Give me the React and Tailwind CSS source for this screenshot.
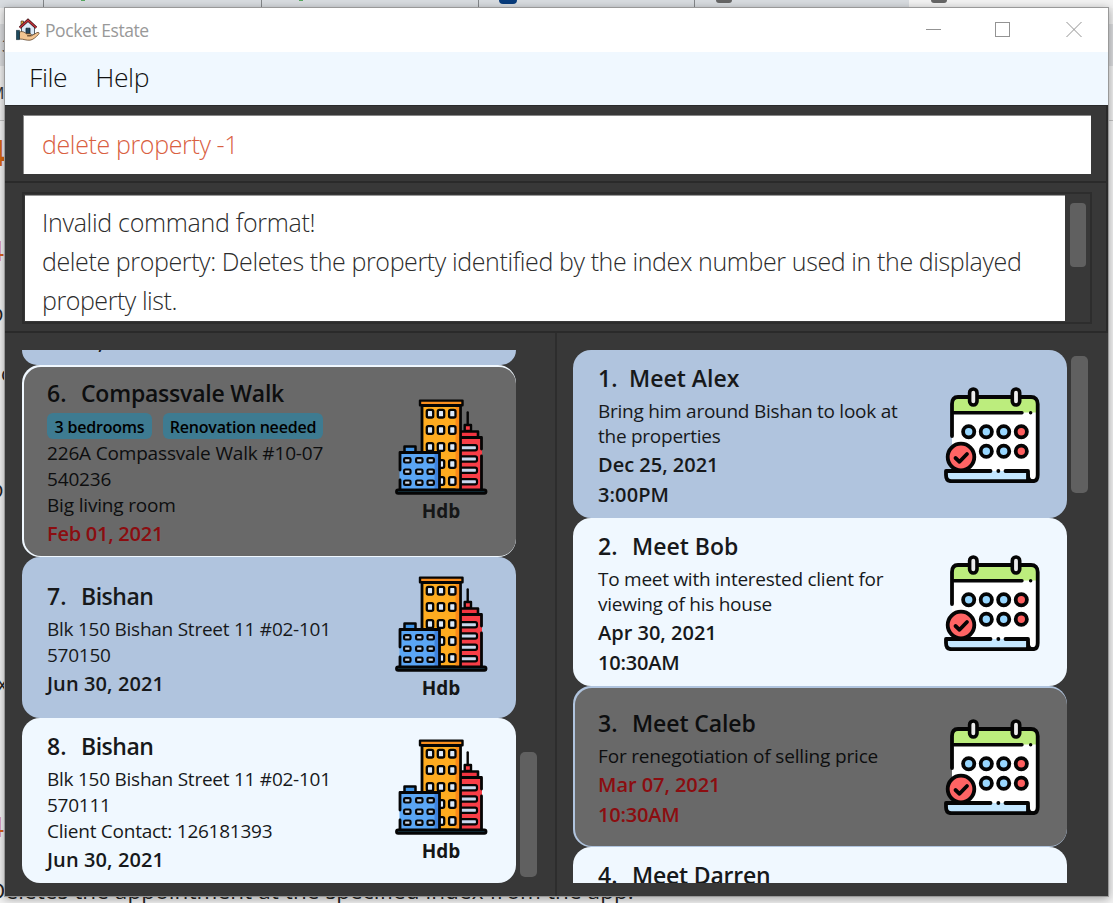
import React from "react";

const CARD_BG = {
  steel: "bg-[#b0c4de]",
  alice: "bg-[#f0f8ff]",
};

function HouseIcon() {
  return (
    <svg className="h-6 w-6 shrink-0" viewBox="0 0 24 24">
      <path d="M5 3h2.500v5H5z" fill="#e8a33a" stroke="#222" strokeWidth=".6" />
      <path d="M5.500 9 12 3l6.500 6v8h-13z" fill="#dceaf8" stroke="#2a3a48" strokeWidth=".8" />
      <path d="M3.800 9.800 12 2.200l8.200 7.600" fill="none" stroke="#3a1518" strokeWidth="2.800" />
      <path d="M3.800 9.800 12 2.200l8.200 7.600" fill="none" stroke="#c6323c" strokeWidth="1.400" />
      <path d="M10 10.200h4V16h-4z" fill="#23445c" stroke="#14242f" strokeWidth=".8" />
      <path d="M3.500 14c3-1.200 5 .2 7 1.800h4c1.200.5.8 1.800-.3 2h-3 4.300l5.500-3.200c1.800-.8 2.800.6 1.500 1.800-3 3-5.500 5.400-8.500 5.800-4 .4-6-1.200-10.500-1.200z" fill="#f5c692" stroke="#4a3018" strokeWidth=".7" />
      <path d="M.3 12.400h3.200v9.200H.3z" fill="#1d4a5e" stroke="#132630" strokeWidth=".6" />
    </svg>
  );
}

function BuildingIcon() {
  return (
    <svg className="block h-24 w-24" viewBox="0 0 96 96" stroke="#050505" strokeWidth="2.800" strokeLinejoin="round" strokeLinecap="round">
      <path d="M74.700 13.500V26" fill="none" strokeWidth="2.400" />
      <path d="M71.700 26h6.300v6h-6.300z" fill="#fb3b45" strokeWidth="2.400" />
      <path d="M67 32.500h18V39H67z" fill="#f23440" strokeWidth="2.600" />
      <path d="M67 38.500h22V91H67z" fill="#f83e47" stroke="none" />
      <path d="M67 38.500h21.500V50M88.500 57v33" fill="none" />
      {[48.700, 60, 71.300, 82.700].map((y) => (
        <rect key={y} x="66" y={y - 2.600} width="18" height="5.200" rx="1.800" fill="#c9d9ee" strokeWidth="2.200" />
      ))}
      <path d="M29 6.500h38.500V91H29z" fill="#ffac20" />
      <path d="M62.500 8h3.600v82h-3.600z" fill="#fb8a18" stroke="none" />
      <path d="M27 1.600h42.500v4.600H27z" fill="#f98e1f" strokeWidth="2.400" />
      {[14.700, 31, 48, 65, 82].map((y) =>
        [37, 48, 59.300].map((x) => (
          <rect key={`${x}-${y}`} x={x - 3.200} y={y - 3.800} width="6.400" height="7.600" rx="1.600" fill="#dceafa" strokeWidth="2.300" />
        ))
      )}
      <path d="M11.500 47.500h11V54h-11z" fill="#4396e8" strokeWidth="2.500" />
      <path d="M6.500 53.300h40V91h-40z" fill="#5aa6f5" stroke="none" />
      <path d="M41.500 54h4v36h-4z" fill="#3f83dd" stroke="none" />
      <path d="M7 71V53.500h39.500V91M7 81v9" fill="none" />
      {[61.300, 72.700, 83.700].map((y) =>
        [14.300, 26.300, 37.700].map((x) => (
          <rect key={`${x}-${y}`} x={x - 3.200} y={y - 2.200} width="6.400" height="4.400" rx="1.200" fill="#cbd9e8" strokeWidth="2.200" />
        ))
      )}
      <rect x="3.500" y="91" width="89.500" height="3.300" rx="1.600" fill="#1d4e63" strokeWidth="2.800" />
    </svg>
  );
}

function CalendarIcon() {
  return (
    <svg className="block h-24 w-24" viewBox="0 0 96 96" stroke="#050505" strokeWidth="3.800" strokeLinejoin="round" strokeLinecap="round">
      <path d="M8 16c0-4 2-6 6-6h73c4 0 6.700 2.500 6.700 6.500V88c0 4-1.800 6.200-5 6.200L60 90H8z" fill="#fff" stroke="none" />
      <path d="M8 25.500V16c0-4 2-6 6-6h73c4 0 6.700 2.500 6.700 6.500v9z" fill="#bced7d" stroke="none" />
      <path d="M8 49V17c0-4.500 2-7 6-7h73c4.200 0 6.700 2.600 6.700 7V88c0 4-1.600 6.200-5 6.200S84 92 84 88" fill="none" />
      <path d="M10 25.700h68M86.600 25.700h.1" fill="none" strokeWidth="3.400" />
      {[29.300, 72].map((x) => (
        <rect key={x} x={x - 3.700} y="2" width="7.400" height="16" rx="3.700" fill="#ececec" strokeWidth="3.600" />
      ))}
      {[44.700, 64.300].map((y, row) =>
        [24.700, 42.300, 59.700, 77.300].slice(row).map((x) => (
          <circle key={`${x}-${y}`} cx={x} cy={y} r="5.600" fill={x > 70 ? "#ff5f5f" : "#98d7ff"} />
        ))
      )}
      <path d="M2 84h82v10.200H7c-3.500 0-5-3-5-6z" fill="#c4e7ff" stroke="none" />
      <path d="M46.500 84H2v4c0 4 2 6.200 5.500 6.200h81M61.500 84H84v9M54.300 84h.1" fill="none" />
      <circle cx="17" cy="70" r="13.300" fill="#ff6464" />
      <path d="m11.500 71 4 3.800 7.500-7.800" fill="none" />
    </svg>
  );
}

function CardShell({ tone, past, height, children }) {
  if (past) {
    return (
      <div className={`flex w-full shrink-0 overflow-hidden rounded-[18px] pt-0.5 pb-px pl-0.5 ${CARD_BG[tone]} ${height}`}>
        <div className="flex flex-1 rounded-[17px] bg-[#696969]">{children}</div>
      </div>
    );
  }
  return <div className={`flex w-full shrink-0 overflow-hidden rounded-[18px] ${CARD_BG[tone]} ${height}`}>{children}</div>;
}

function Heading({ no, title, tracking, gap }) {
  return (
    <h2 className="flex h-[30px] text-[23px] leading-[30px] font-semibold whitespace-nowrap">
      <span className={`shrink-0 ${gap}`}>{no}.</span>
      <span className={tracking}>{title}</span>
    </h2>
  );
}

function Column({ item, children }) {
  return (
    <div className={`flex shrink-0 flex-col ${item.past ? "w-[369px] pl-[23px] text-[#0d0e0f]" : "w-[371px] pl-[25px] text-[#17191b]"} ${item.pad}`}>
      {children}
    </div>
  );
}

function PropertyCard({ p }) {
  return (
    <CardShell tone={p.tone} past={p.past} height={p.height}>
      <Column item={p}>
        <Heading no={p.no} title={p.title} tracking={p.tracking} gap="w-[34px]" />
        {p.tags && (
          <div className="mt-[5px] flex h-[26px] gap-[11px]">
            {p.tags.map((t) => (
              <span key={t.label} className={`flex h-[26px] items-center justify-center rounded-[6px] bg-[#3e7b91] pt-px text-[16px] font-semibold whitespace-nowrap text-black ${t.style}`}>
                {t.label}
              </span>
            ))}
          </div>
        )}
        <div className={p.tags ? "mt-px tracking-[-0.17px]" : "mt-[5px] tracking-[-0.25px]"}>
          {p.lines.map((l) => (
            <p key={l} className="h-[26px] text-[19px] leading-[26px] whitespace-nowrap">{l}</p>
          ))}
        </div>
        <p className={`mt-0.5 h-7 text-[20px] leading-7 font-semibold whitespace-nowrap ${p.dateTracking} ${p.past ? "text-[#8b0d10]" : ""}`}>{p.date}</p>
      </Column>
      <div className={`flex w-24 flex-col items-center ${p.iconPad}`}>
        <BuildingIcon />
        <span className="mt-0.5 text-[19px] leading-7 font-bold text-[#151617]">Hdb</span>
      </div>
    </CardShell>
  );
}

function AppointmentCard({ a }) {
  return (
    <CardShell tone={a.tone} past={a.past} height={a.height}>
      <Column item={a}>
        <Heading no={a.no} title={a.title} tracking={a.tracking} gap={a.gap} />
        <div className={`mt-1.5 ${a.past ? "tracking-[-0.17px]" : "tracking-[-0.26px]"}`}>
          {a.lines.map((l) => (
            <p key={l} className="h-[25px] text-[19px] leading-[25px] whitespace-nowrap">{l}</p>
          ))}
        </div>
        {a.date && (
          <div className={`mt-px text-[20px] leading-[30px] font-semibold ${a.past ? "text-[#8b0d10]" : ""}`}>
            <p className={a.dateTracking}>{a.date}</p>
            <p className={a.timeTracking}>{a.time}</p>
          </div>
        )}
      </Column>
      {a.date && (
        <div className={a.iconPad}>
          <CalendarIcon />
        </div>
      )}
    </CardShell>
  );
}

const properties = [
  {
    no: 6, title: "Compassvale Walk", tracking: "tracking-[-0.22px]", tone: "alice", past: true, height: "h-[192px]", pad: "pt-[11px]", iconPad: "pt-[32px]",
    tags: [
      { label: "3 bedrooms", style: "w-[105px] tracking-[-0.2px]" },
      { label: "Renovation needed", style: "w-[160px] tracking-[-0.2px]" },
    ],
    lines: ["226A Compassvale Walk #10-07", "540236", "Big living room"],
    date: "Feb 01, 2021", dateTracking: "tracking-[-0.25px]",
  },
  {
    no: 7, title: "Bishan", tracking: "tracking-[-0.5px]", tone: "steel", height: "h-[161px]", pad: "pt-[24px]", iconPad: "pt-[19px]",
    lines: ["Blk 150 Bishan Street 11 #02-101", "570150"],
    date: "Jun 30, 2021", dateTracking: "tracking-[0.1px]",
  },
  {
    no: 8, title: "Bishan", tracking: "tracking-[-0.5px]", tone: "alice", height: "h-[165px]", pad: "pt-[13px]", iconPad: "pt-[21px]",
    lines: ["Blk 150 Bishan Street 11 #02-101", "570111", "Client Contact: 126181393"],
    date: "Jun 30, 2021", dateTracking: "tracking-[0.1px]",
  },
];

const appointments = [
  {
    no: 1, title: "Meet Alex", tracking: "tracking-normal", gap: "w-[31px]", tone: "steel", height: "h-[168px]", pad: "pt-[13px]", iconPad: "pt-[37px]",
    lines: ["Bring him around Bishan to look at", "the properties"],
    date: "Dec 25, 2021", dateTracking: "tracking-normal", time: "3:00PM", timeTracking: "tracking-[0.1px]",
  },
  {
    no: 2, title: "Meet Bob", tracking: "tracking-normal", gap: "w-[34px]", tone: "alice", height: "h-[168px]", pad: "pt-[13px]", iconPad: "pt-[37px]",
    lines: ["To meet with interested client for", "viewing of his house"],
    date: "Apr 30, 2021", dateTracking: "tracking-normal", time: "10:30AM", timeTracking: "tracking-[-0.2px]",
  },
  {
    no: 3, title: "Meet Caleb", tracking: "tracking-[-0.1px]", gap: "w-[34px]", tone: "steel", past: true, height: "h-[161px]", pad: "pt-[20px]", iconPad: "pt-[31px]",
    lines: ["For renegotiation of selling price"],
    date: "Mar 07, 2021", dateTracking: "tracking-[-0.05px]", time: "10:30AM", timeTracking: "tracking-[-0.2px]",
  },
  {
    no: 4, title: "Meet Darren", tracking: "tracking-[-0.2px]", gap: "w-[34px]", tone: "alice", height: "h-[168px]", pad: "pt-[13px]",
    lines: [],
  },
];

function Backdrop() {
  return (
    <div className="absolute inset-0 overflow-hidden bg-white">
      <div className="flex h-2 bg-[#d9dde1]">
        <div className="h-full w-11 border-r border-[#84878a]" />
        <div className="flex h-full w-[218px] items-start border-r border-[#84878a] pl-[37px]"><span className="h-px w-1 bg-[#57a860]" /></div>
        <div className="flex h-full w-[217px] items-start border-r border-[#84878a] pl-[37px]"><span className="h-px w-1 bg-[#57a860]" /></div>
        <div className="flex h-full w-[216px] items-start border-r border-[#84878a] pl-5"><span className="h-1 w-[18px] rounded-b-full bg-[#073b7c]" /></div>
        <div className="flex h-full w-[214px] items-start pl-[21px]"><span className="h-[3px] w-4 rounded-b-full bg-[#666]" /></div>
        <div className="flex h-full flex-1 items-start bg-[#f3f3f3] pl-[22px]"><span className="h-[3px] w-4 rounded-b-full bg-[#666]" /></div>
      </div>
      <div className="h-4 bg-[#f0f0f0]" />
      <div className="h-[42px] bg-[#dcdddf]" />
      <div className="h-[55px] border-b border-[#c4c4c4] bg-[#f1f1f1]" />
      <div className="h-[782px] bg-[#f4f4f4]" />
      <span className="absolute top-[36px] left-0.5 text-[17px] leading-5 text-[#333]">3</span>
      <span className="absolute top-[83px] left-[-10px] text-[16px] leading-5 text-[#333]">M</span>
      <span className="absolute top-[133px] left-[-15px] text-[36px] leading-10 font-bold text-[#d9660f]">4</span>
      <span className="absolute top-[234px] left-[-12px] text-[28px] leading-8 text-[#d9601c]">4</span>
      <span className="absolute top-[303px] left-[-11px] text-[20px] leading-6 text-[#222]">D</span>
      <span className="absolute top-[362px] left-px text-[20px] leading-6 text-[#222]">c</span>
      <span className="absolute top-[479px] left-[-11px] text-[20px] leading-6 text-[#222]">D</span>
      <span className="absolute top-[672px] left-[-3px] text-[20px] leading-6 text-[#222]">x</span>
      <span className="absolute top-[810px] left-[-12px] text-[28px] leading-8 text-[#d9601c]">4</span>
      <span className="absolute top-[877px] left-[-11px] text-[22.500px] leading-7 tracking-[0.09px] whitespace-nowrap text-[#222]">Deletes the appointment at the specified index from the app.</span>
    </div>
  );
}

export default function App() {
  return (
    <div className="relative h-[903px] w-[1113px] overflow-hidden font-['Open_Sans','Noto_Sans',sans-serif]">
      <Backdrop />
      <div className="absolute top-[7px] left-1 flex h-[890px] w-[1105px] flex-col border border-[#999] bg-[#383838] shadow-[0_2px_9px_rgba(0,0,0,0.35)]">
        <header className="flex h-11 shrink-0 items-center bg-white pl-[11px]">
          <HouseIcon />
          <span className="ml-[5px] flex-1 text-[17.500px] leading-6 tracking-[-0.43px] text-[#999]">Pocket Estate</span>
          <svg className="mr-[25px] mb-0.5 h-4 w-[157px]" viewBox="0 0 157 16" fill="none" stroke="#939393" shapeRendering="crispEdges">
            <path d="M0 8.500h15M69.500 1.500h14v14h-14z" />
            <path d="m140.500 1 15 15m0-15-15 15" shapeRendering="auto" />
          </svg>
        </header>
        <nav className="flex h-[53px] shrink-0 items-center gap-[28px] bg-[#f0f8ff] pb-px pl-6 text-[26.500px] font-light tracking-[-0.4px] text-[#111]">
          <span>File</span>
          <span>Help</span>
        </nav>
        <section className="h-[78px] shrink-0 border-t border-r-2 border-b-2 border-[#2a2a2a] pt-[9px] pr-[14px] pl-[18px]">
          <div className="flex h-[59px] w-[1068px] items-center border-t border-l border-[#888] bg-white pl-[18px] text-[25px] font-light tracking-[-0.37px] text-[#d9603f]">delete property -1</div>
        </section>
        <section className="h-[150px] shrink-0 border-r-2 border-b-2 border-[#2a2a2a] pt-[9px] pl-[17px]">
          <div className="flex h-[132px] w-[1070px] border-2 border-[#2d2d2d] pt-px pl-px">
            <div className="h-[126px] w-[1040px] shrink-0 overflow-hidden border-t border-[#999] bg-white pt-[7px] pl-[17px] text-[25px] leading-[39px] font-light text-[#2c2c2c]">
              <p className="tracking-[-0.3px]">Invalid command format!</p>
              <p className="tracking-[-0.39px] whitespace-nowrap">delete property: Deletes the property identified by the index number used in the displayed</p>
              <p className="tracking-[-0.45px]">property list.</p>
            </div>
            <div className="mt-[8px] ml-[5px] h-16 w-4 rounded-[4px] bg-[#606060]" />
          </div>
        </section>
        <main className="flex min-h-0 flex-1">
          <section className="flex w-[552px] shrink-0 border-r-2 border-[#2d2d2d] pt-[17px] pl-[17px]">
            <div className="flex h-[533px] w-[494px] shrink-0 flex-col overflow-hidden">
              <div className="h-[15px] w-full shrink-0 overflow-hidden rounded-b-[18px] bg-[#b0c4de] pl-[76px]">
                <p className="-mt-[22px] text-[20px] leading-7 font-semibold text-[#17191b]">,</p>
              </div>
              {properties.map((p) => <PropertyCard key={p.no} p={p} />)}
            </div>
            <div className="mt-[402px] ml-1 h-[125px] w-[17px] rounded-[5px] bg-[#606060]" />
          </section>
          <section className="flex flex-1 pt-[17px] pl-4">
            <div className="flex h-[533px] w-[494px] shrink-0 flex-col overflow-hidden">
              {appointments.map((a) => <AppointmentCard key={a.no} a={a} />)}
            </div>
            <div className="mt-1.5 ml-1 h-[137px] w-[17px] rounded-[5px] bg-[#606060]" />
          </section>
        </main>
      </div>
    </div>
  );
}
